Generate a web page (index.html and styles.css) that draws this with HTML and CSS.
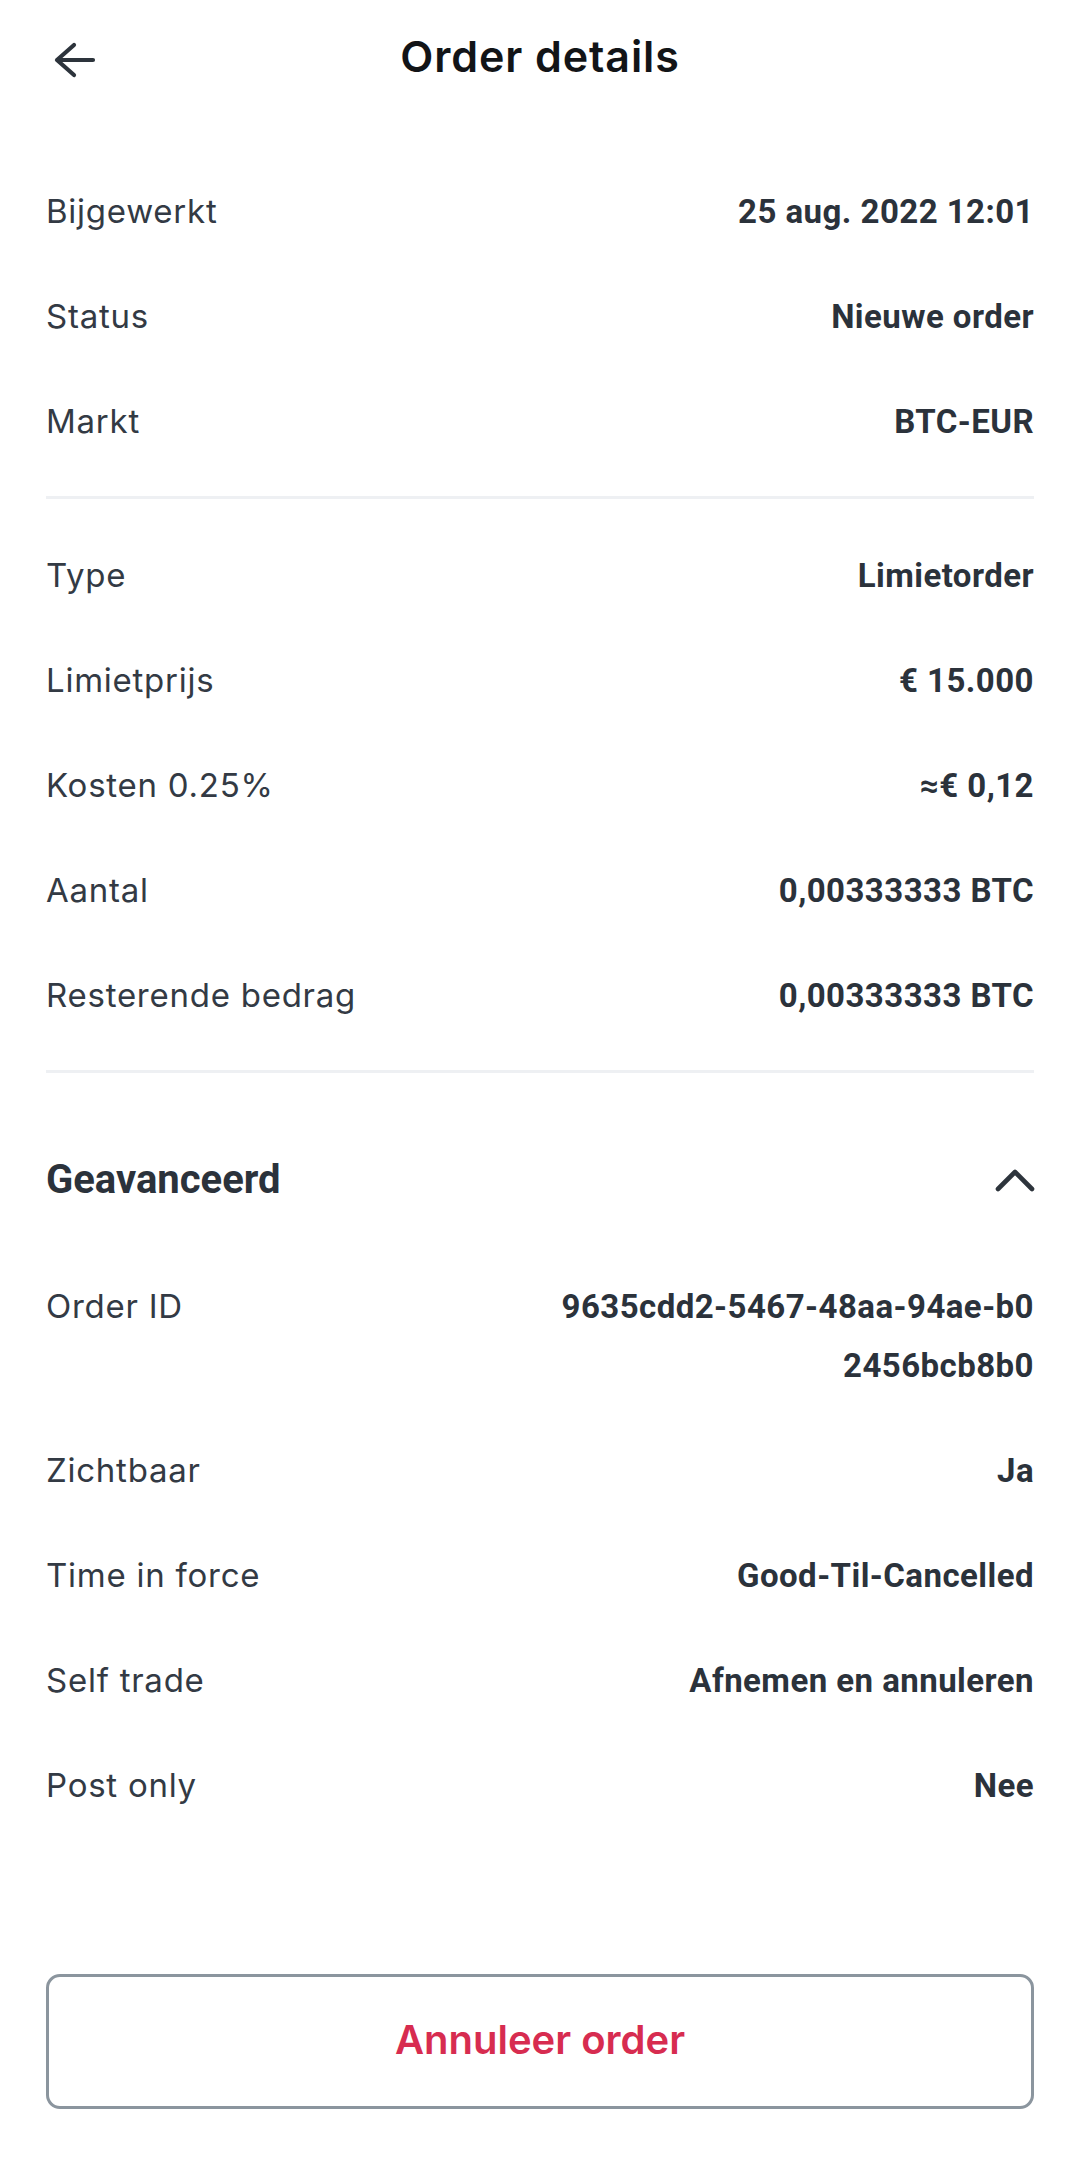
FILE: index.html
```html
<!DOCTYPE html>
<html lang="nl">

<head>
    <meta charset="UTF-8">
    <meta name="viewport" content="width=device-width, initial-scale=1.0">
    <title>Order details</title>
    <link rel="stylesheet" href="styles.css">
</head>

<body>
    <div class="page">
        <div class="header">
            <span class="back">
                <svg width="44" height="36" viewBox="0 0 44 36">
                    <path d="M22 3 L5 18 L22 33 M5 18 H41" fill="none" stroke="#2d343c" stroke-width="4.2" stroke-linecap="round" stroke-linejoin="round"/>
                </svg>
            </span>
            <h1 class="title">Order details</h1>
            <span></span>
        </div>

        <div class="section first">
            <div class="row"><span class="label">Bijgewerkt</span><span class="value">25 aug. 2022 12:01</span></div>
            <div class="row"><span class="label">Status</span><span class="value">Nieuwe order</span></div>
            <div class="row"><span class="label">Markt</span><span class="value">BTC-EUR</span></div>
        </div>

        <div class="section">
            <div class="row"><span class="label">Type</span><span class="value">Limietorder</span></div>
            <div class="row"><span class="label">Limietprijs</span><span class="value">€ 15.000</span></div>
            <div class="row"><span class="label">Kosten 0.25%</span><span class="value">≈€ 0,12</span></div>
            <div class="row"><span class="label">Aantal</span><span class="value">0,00333333 BTC</span></div>
            <div class="row"><span class="label">Resterende bedrag</span><span class="value">0,00333333 BTC</span></div>
        </div>

        <div class="advanced">
            <div class="adv-head">
                <span class="adv-title">Geavanceerd</span>
                <svg width="44" height="26" viewBox="0 0 44 26">
                    <path d="M5 22 L22 5 L39 22" fill="none" stroke="#2d343c" stroke-width="4.6" stroke-linecap="round" stroke-linejoin="round"/>
                </svg>
            </div>
            <div class="row"><span class="label">Order ID</span><span class="value id">9635cdd2-5467-48aa-94ae-b02456bcb8b0</span></div>
            <div class="row"><span class="label">Zichtbaar</span><span class="value">Ja</span></div>
            <div class="row"><span class="label">Time in force</span><span class="value">Good-Til-Cancelled</span></div>
            <div class="row"><span class="label">Self trade</span><span class="value">Afnemen en annuleren</span></div>
            <div class="row"><span class="label">Post only</span><span class="value">Nee</span></div>
        </div>

        <div class="actions">
            <button class="cancel">Annuleer order</button>
        </div>
    </div>
</body>

</html>
```

FILE: styles.css
```css
* {
    margin: 0;
    padding: 0;
    box-sizing: border-box;
}

body {
    background-color: #ffffff;
    font-family: Inter, "Noto Sans", sans-serif;
    color: #2f3640;
}

.page {
    width: 1080px;
}

.header {
    height: 112px;
    display: grid;
    grid-template-columns: 1fr auto 1fr;
    align-items: center;
}

.back {
    padding-left: 52px;
    padding-top: 8px;
    display: flex;
}

.title {
    font-size: 43px;
    font-weight: 600;
    color: #121417;
    letter-spacing: 0.9px;
}

.section {
    margin: 0 46px 0 46px;
    padding: 24px 0 22px 0;
    border-bottom: 3px solid #eef0f3;
}

.section.first {
    padding-top: 47px;
}

.row {
    display: flex;
    justify-content: space-between;
    align-items: flex-start;
    padding: 23px 0;
    line-height: 59px;
}

.label {
    font-size: 33px;
    font-weight: 400;
    color: #333a44;
    letter-spacing: 0.75px;
}

.value {
    font-family: Roboto, "Liberation Sans", sans-serif;
    font-size: 33px;
    font-weight: 700;
    color: #2b323b;
    text-align: right;
    letter-spacing: 0.45px;
}

.value.id {
    max-width: 482px;
    word-break: break-all;
}

.advanced {
    margin: 0 46px;
    padding-top: 54px;
}

.adv-head {
    height: 105px;
    margin-bottom: 22px;
    display: flex;
    justify-content: space-between;
    align-items: center;
}

.adv-title {
    font-family: Roboto, "Liberation Sans", sans-serif;
    font-size: 40px;
    font-weight: 700;
    color: #2b323b;
}

.adv-head svg {
    margin-right: -3px;
}

.actions {
    padding: 136px 46px 0 46px;
}

.cancel {
    width: 100%;
    height: 135px;
    border: 3px solid #8b959e;
    border-radius: 14px;
    background-color: #ffffff;
    font-family: Inter, "Noto Sans", sans-serif;
    font-size: 40px;
    font-weight: 600;
    color: #d72c50;
    padding-bottom: 4px;
}
```
